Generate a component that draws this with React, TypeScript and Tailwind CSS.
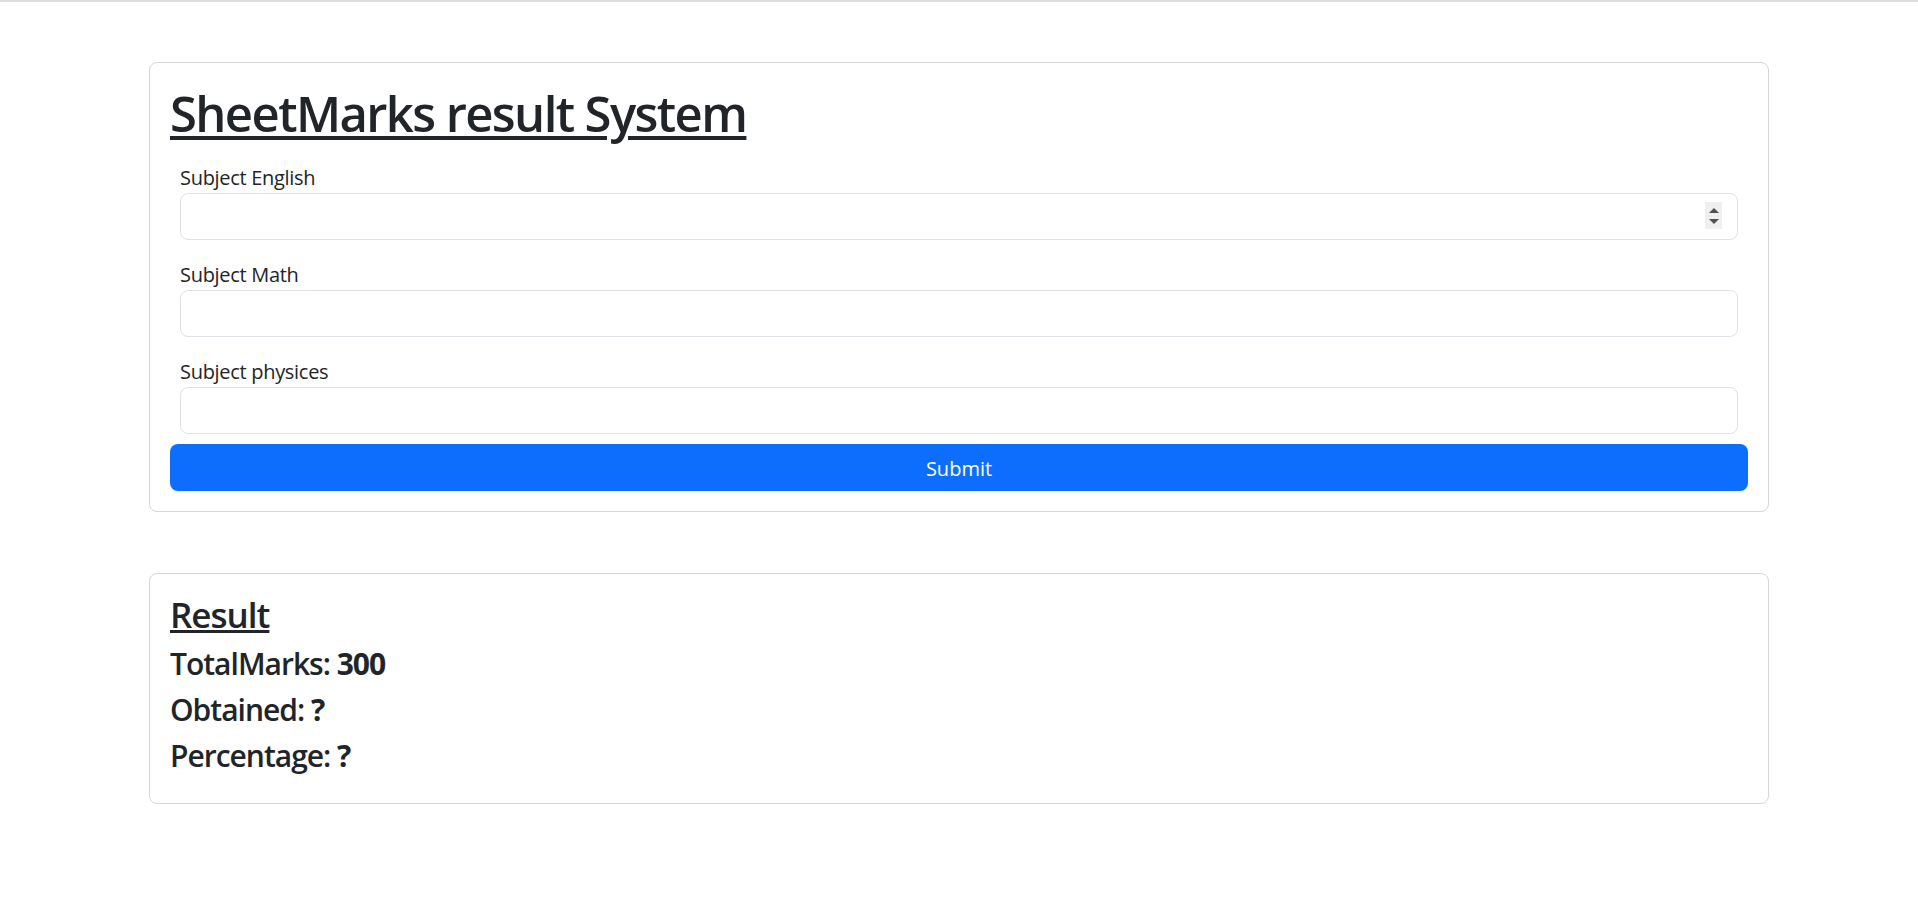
const subjects = [
  { id: "english", label: "Subject English", spinner: true },
  { id: "math", label: "Subject Math", spinner: false },
  { id: "physics", label: "Subject physices", spinner: false },
];

const App = () => {
  return (
    <div className="min-h-screen bg-white text-[#212529] font-['Open_Sans',sans-serif]">
      <div className="h-[2px] bg-[#dedede]" />

      <div className="mx-auto w-[1620px] pt-[60px] pb-10">
        {/* Marks form */}
        <div className="rounded-[8px] border border-[#d6d6d6] p-[20px]">
          <h1 className="text-[49px] leading-[60px] font-[540] tracking-[-1.6px] underline decoration-[4px] underline-offset-[4px] mb-[20px]">
            SheetMarks result System
          </h1>

          <form onSubmit={(e) => e.preventDefault()}>
            <div className="px-[10px]">
              {subjects.map((s, i) => (
                <div key={s.id} className={i < subjects.length - 1 ? "mb-[20px]" : ""}>
                  <label htmlFor={s.id} className="block text-[20px] leading-[30px] tracking-[-0.3px]">
                    {s.label}
                  </label>
                  <div className="relative">
                    <input
                      id={s.id}
                      type="text"
                      inputMode="numeric"
                      className="block w-full h-[47px] rounded-[8px] border border-[#dee2e6] px-[15px] text-[20px] outline-none"
                    />
                    {s.spinner && (
                      <div className="absolute right-[16px] top-[9px] flex h-[27px] w-[17px] flex-col items-center justify-center gap-[6px] bg-[#efefef]">
                        <span className="h-0 w-0 border-x-[5px] border-b-[5px] border-x-transparent border-b-[#505050]" />
                        <span className="h-0 w-0 border-x-[5px] border-t-[5px] border-x-transparent border-t-[#505050]" />
                      </div>
                    )}
                  </div>
                </div>
              ))}
            </div>

            <button
              type="submit"
              className="mt-[10px] block w-full h-[47px] pt-[3px] rounded-[8px] bg-[#0d6efd] text-[20px] text-white"
            >
              Submit
            </button>
          </form>
        </div>

        {/* Result summary */}
        <div className="mt-[61px] rounded-[8px] border border-[#d6d6d6] px-[20px] pt-[20px] pb-[19px]">
          <h3 className="text-[35px] leading-[42px] font-semibold tracking-[-1px] underline decoration-[3px] underline-offset-[2px] mb-[10px]">
            Result
          </h3>
          <h4 className="text-[30px] leading-[36px] font-semibold tracking-[-1px] mb-[10px]">
            TotalMarks: <b className="font-bold">300</b>
          </h4>
          <h4 className="text-[30px] leading-[36px] font-semibold tracking-[-1px] mb-[10px]">
            Obtained: <b className="font-bold">?</b>
          </h4>
          <h4 className="text-[30px] leading-[36px] font-semibold tracking-[-1px] mb-[10px]">
            Percentage: <b className="font-bold">?</b>
          </h4>
        </div>
      </div>
    </div>
  );
};

export default App;
